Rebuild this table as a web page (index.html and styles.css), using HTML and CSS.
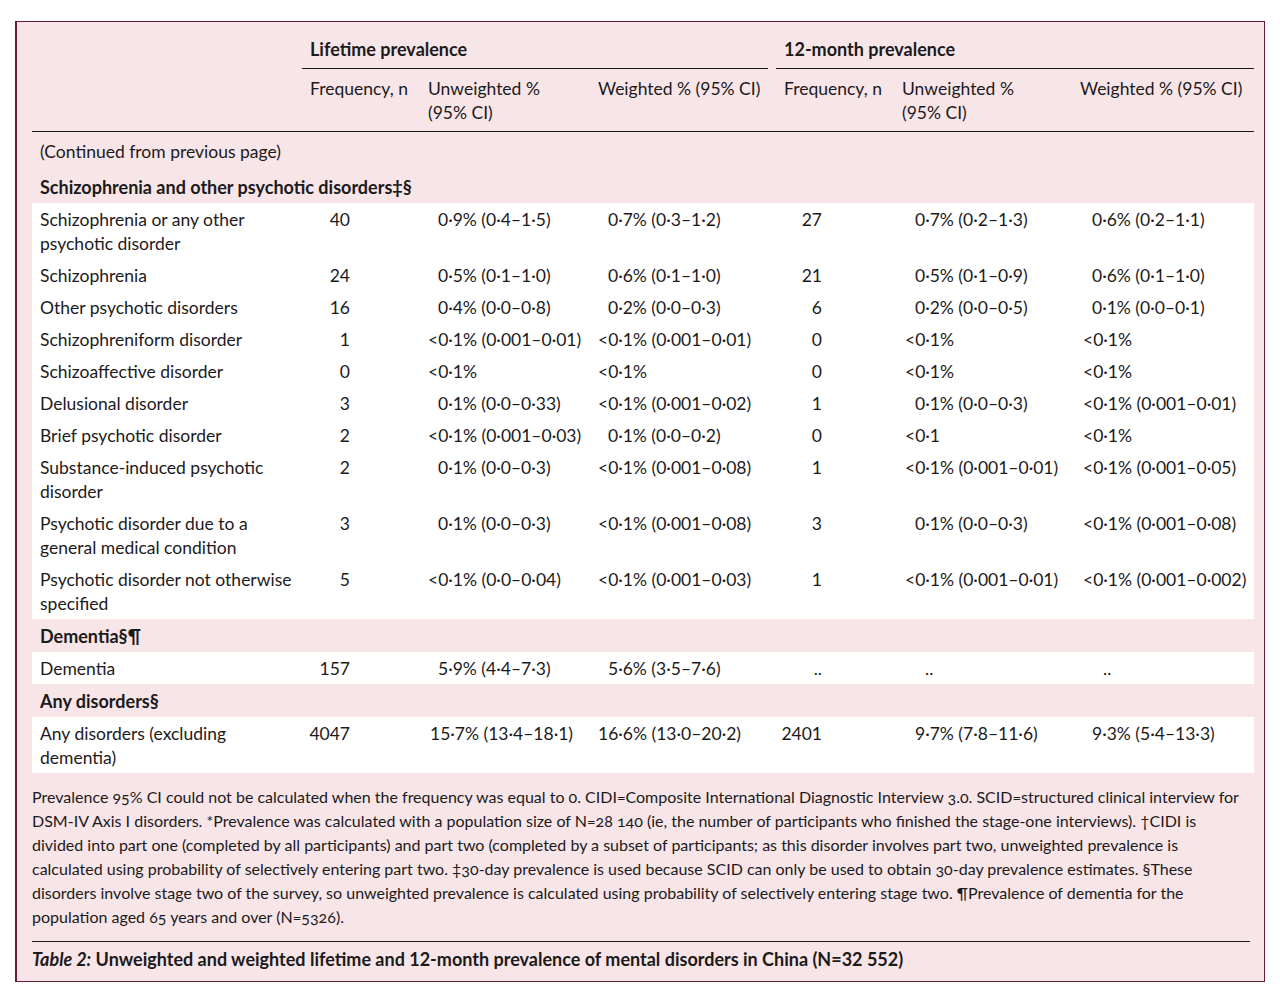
FILE: index.html
```html
<!DOCTYPE html>
<html lang="en">
<head>
<meta charset="utf-8">
<title>Table 2</title>
<link rel="stylesheet" href="styles.css">
</head>
<body>
<div class="box">
  <table class="prev">
    <colgroup>
      <col class="c-label"><col class="c-f1"><col class="c-u1"><col class="c-w1"><col class="c-f2"><col class="c-u2"><col class="c-w2">
    </colgroup>
    <thead>
      <tr class="grp">
        <th></th>
        <th colspan="3"><div class="grp-l">Lifetime prevalence</div></th>
        <th colspan="3"><div class="grp-r">12-month prevalence</div></th>
      </tr>
      <tr class="sub">
        <th></th>
        <th>Frequency, n</th>
        <th>Unweighted %<br>(95% CI)</th>
        <th>Weighted % (95% CI)</th>
        <th class="f2h">Frequency, n</th>
        <th>Unweighted %<br>(95% CI)</th>
        <th>Weighted % (95% CI)</th>
      </tr>
    </thead>
    <tbody>
      <tr class="cont"><td colspan="7">(Continued from previous page)</td></tr>
      <tr class="sec first"><td colspan="7">Schizophrenia and other psychotic disorders‡§</td></tr>
      <tr class="row"><td>Schizophrenia or any other<br>psychotic disorder</td><td>40</td><td>0·9% (0·4–1·5)</td><td>0·7% (0·3–1·2)</td><td>27</td><td>0·7% (0·2–1·3)</td><td>0·6% (0·2–1·1)</td></tr>
      <tr class="row"><td>Schizophrenia</td><td>24</td><td>0·5% (0·1–1·0)</td><td>0·6% (0·1–1·0)</td><td>21</td><td>0·5% (0·1–0·9)</td><td>0·6% (0·1–1·0)</td></tr>
      <tr class="row"><td>Other psychotic disorders</td><td>16</td><td>0·4% (0·0–0·8)</td><td>0·2% (0·0–0·3)</td><td>6</td><td>0·2% (0·0–0·5)</td><td>0·1% (0·0–0·1)</td></tr>
      <tr class="row"><td>Schizophreniform disorder</td><td>1</td><td class="lt">&lt;0·1% (0·001–0·01)</td><td class="lt">&lt;0·1% (0·001–0·01)</td><td>0</td><td class="lt">&lt;0·1%</td><td class="lt">&lt;0·1%</td></tr>
      <tr class="row"><td>Schizoaffective disorder</td><td>0</td><td class="lt">&lt;0·1%</td><td class="lt">&lt;0·1%</td><td>0</td><td class="lt">&lt;0·1%</td><td class="lt">&lt;0·1%</td></tr>
      <tr class="row"><td>Delusional disorder</td><td>3</td><td>0·1% (0·0–0·33)</td><td class="lt">&lt;0·1% (0·001–0·02)</td><td>1</td><td>0·1% (0·0–0·3)</td><td class="lt">&lt;0·1% (0·001–0·01)</td></tr>
      <tr class="row"><td>Brief psychotic disorder</td><td>2</td><td class="lt">&lt;0·1% (0·001–0·03)</td><td>0·1% (0·0–0·2)</td><td>0</td><td class="lt">&lt;0·1</td><td class="lt">&lt;0·1%</td></tr>
      <tr class="row"><td>Substance-induced psychotic<br>disorder</td><td>2</td><td>0·1% (0·0–0·3)</td><td class="lt">&lt;0·1% (0·001–0·08)</td><td>1</td><td class="lt">&lt;0·1% (0·001–0·01)</td><td class="lt">&lt;0·1% (0·001–0·05)</td></tr>
      <tr class="row"><td>Psychotic disorder due to a<br>general medical condition</td><td>3</td><td>0·1% (0·0–0·3)</td><td class="lt">&lt;0·1% (0·001–0·08)</td><td>3</td><td>0·1% (0·0–0·3)</td><td class="lt">&lt;0·1% (0·001–0·08)</td></tr>
      <tr class="row"><td>Psychotic disorder not otherwise<br>specified</td><td>5</td><td class="lt">&lt;0·1% (0·0–0·04)</td><td class="lt">&lt;0·1% (0·001–0·03)</td><td>1</td><td class="lt">&lt;0·1% (0·001–0·01)</td><td class="lt">&lt;0·1% (0·001–0·002)</td></tr>
      <tr class="sec"><td colspan="7">Dementia§¶</td></tr>
      <tr class="row"><td>Dementia</td><td>157</td><td>5·9% (4·4–7·3)</td><td>5·6% (3·5–7·6)</td><td>..</td><td class="dots">..</td><td class="dots">..</td></tr>
      <tr class="sec"><td colspan="7">Any disorders§</td></tr>
      <tr class="row"><td>Any disorders (excluding<br>dementia)</td><td>4047</td><td class="two">15·7% (13·4–18·1)</td><td class="lt">16·6% (13·0–20·2)</td><td>2401</td><td>9·7% (7·8–11·6)</td><td>9·3% (5·4–13·3)</td></tr>
    </tbody>
  </table>
  <p class="notes">Prevalence 95% CI could not be calculated when the frequency was equal to 0. CIDI=Composite International Diagnostic Interview 3.0. SCID=structured clinical interview for DSM-IV Axis I disorders. *Prevalence was calculated with a population size of N=28 140 (ie, the number of participants who finished the stage-one interviews). †CIDI is divided into part one (completed by all participants) and part two (completed by a subset of participants; as this disorder involves part two, unweighted prevalence is calculated using probability of selectively entering part two. ‡30-day prevalence is used because SCID can only be used to obtain 30-day prevalence estimates. §These disorders involve stage two of the survey, so unweighted prevalence is calculated using probability of selectively entering stage two. ¶Prevalence of dementia for the population aged 65 years and over (N=5326).</p>
  <p class="caption"><em>Table 2:</em> Unweighted and weighted lifetime and 12-month prevalence of mental disorders in China (N=32 552)</p>
</div>
</body>
</html>
```

FILE: styles.css
```css
html, body {
  margin: 0;
  padding: 0;
  background: #ffffff;
}

body {
  font-family: Lato, "Open Sans", "Liberation Sans", sans-serif;
  font-size: 16px;
  line-height: 24px;
  color: #1c1a1b;
}

.box {
  margin: 21px 0 0 15px;
  width: 1250px;
  box-sizing: border-box;
  border: 1px solid #6a1d38;
  border-left-width: 2px;
  background: #f7e5e8;
  padding: 0 11px 0 15px;
  height: 961px;
}

.prev {
  border-collapse: collapse;
  table-layout: fixed;
  width: 1222px;
  font-size: 17.5px;
}

.c-label { width: 270px; }
.c-f1 { width: 118px; }
.c-u1 { width: 170px; }
.c-w1 { width: 178px; }
.c-f2 { width: 126px; }
.c-u2 { width: 178px; }
.c-w2 { width: 182px; }

.prev th {
  font-weight: normal;
  text-align: left;
  vertical-align: top;
  padding: 0;
}

.grp th {
  padding-top: 15px;
}

.grp-l, .grp-r {
  font-weight: bold;
  font-size: 18px;
  padding: 0 0 7px 8px;
  border-bottom: 1px solid #1c1a1b;
}

.grp-r {
  margin-left: 8px;
}

.sub th {
  padding: 8px 0 6px 8px;
  border-bottom: 1px solid #1c1a1b;
}

.sub th.f2h {
  padding-left: 16px;
}

.prev td {
  padding: 5px 0 3.1px;
  vertical-align: top;
  white-space: nowrap;
}

.cont td {
  padding: 8px 8px 6px;
}

.sec td {
  font-weight: bold;
  font-size: 18px;
  padding: 4.5px 8px 4px;
}

.row td {
  background: #ffffff;
}

.row td:nth-child(1) { padding-left: 8px; }
.row td:nth-child(2) { text-align: right; padding-right: 70px; }
.row td:nth-child(3) { padding-left: 18px; }
.row td:nth-child(4) { padding-left: 18px; }
.row td:nth-child(5) { text-align: right; padding-right: 72px; }
.row td:nth-child(6) { padding-left: 21px; }
.row td:nth-child(7) { padding-left: 20px; }

.row td:nth-child(3).lt,
.row td:nth-child(4).lt { padding-left: 8px; }
.row td:nth-child(6).lt,
.row td:nth-child(7).lt { padding-left: 11px; }
.row td.two { padding-left: 10px; }
.row td.dots { padding-left: 31px; }

.notes {
  margin: 12px 0 0;
  padding: 0 0 12px 0;
  width: 1218px;
  border-bottom: 1px solid #1c1a1b;
  font-variant-numeric: oldstyle-nums;
}

.caption {
  margin: 0;
  padding: 5px 0 0;
  font-weight: bold;
  font-size: 18px;
}

.caption em {
  font-style: italic;
}
```
